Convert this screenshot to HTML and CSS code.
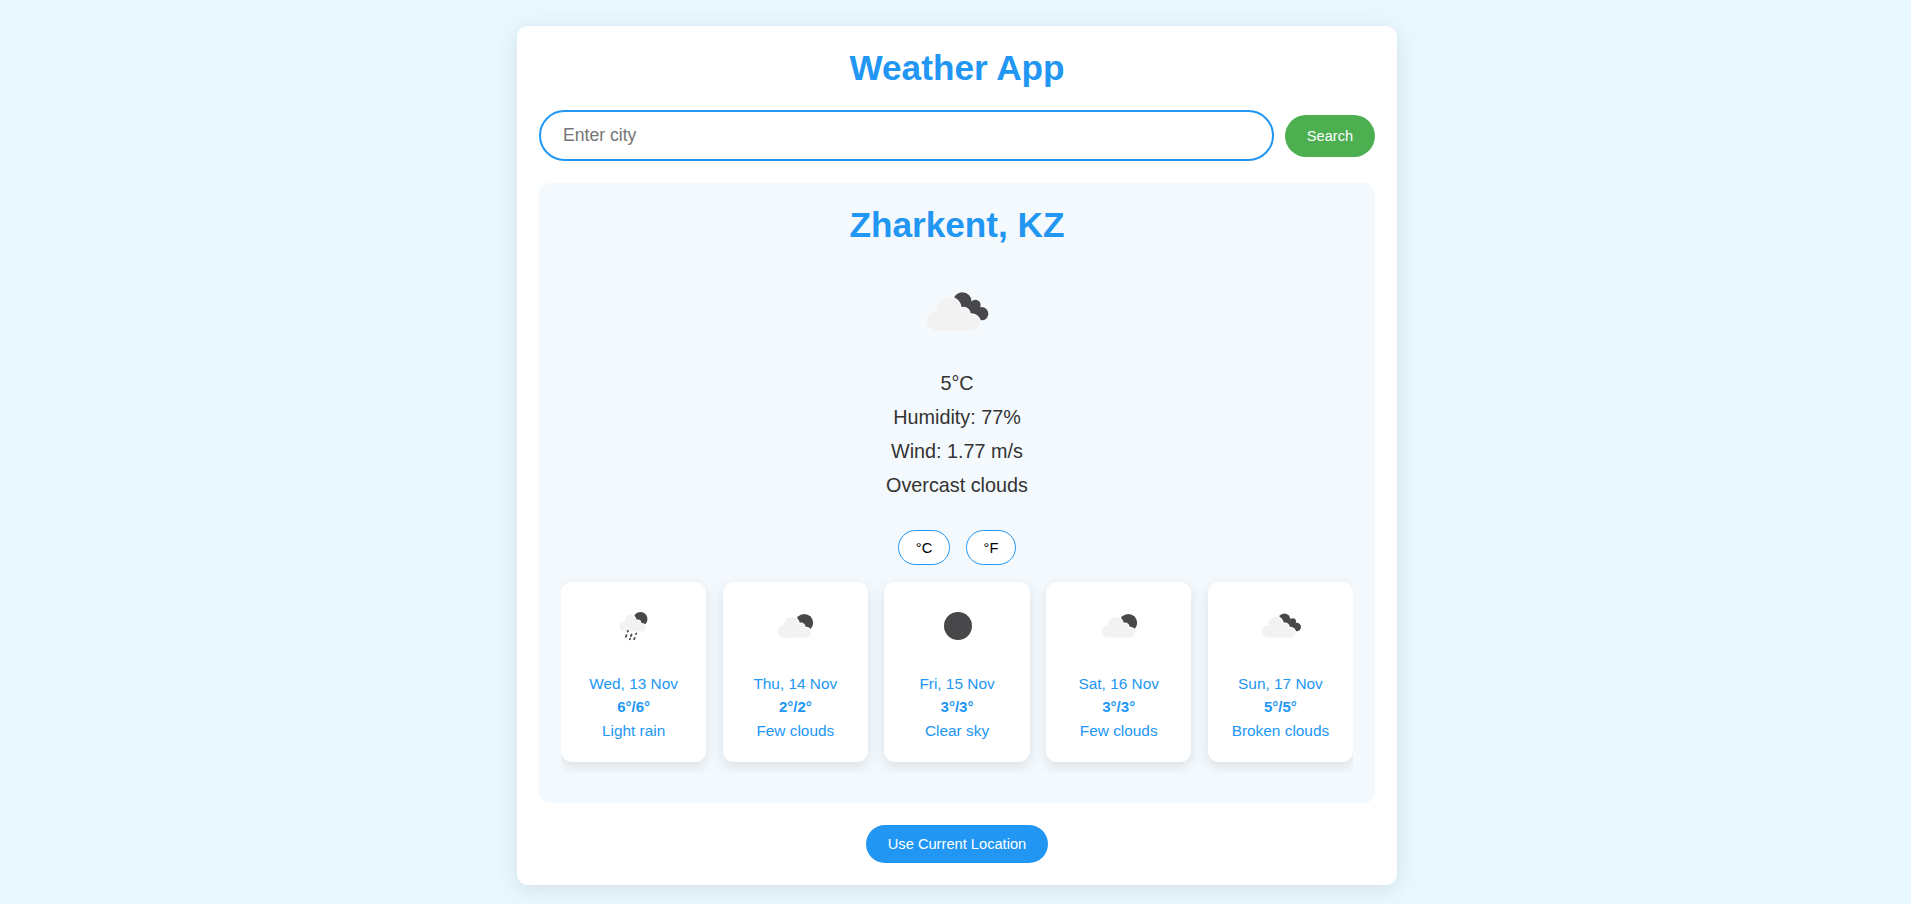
FILE: index.html
```html
<!DOCTYPE html>
<html lang="en">
<head>
<meta charset="utf-8">
<title>Weather App</title>
<link rel="stylesheet" href="styles.css">
</head>
<body>
<svg class="sprite" aria-hidden="true">
  <defs>
    <g id="cloud">
      <circle cx="109" cy="152" r="29"/>
      <circle cx="146" cy="117" r="34"/>
      <circle cx="190" cy="133" r="18"/>
      <circle cx="215" cy="158" r="23"/>
      <rect x="109" y="140" width="97" height="41"/>
    </g>
    <mask id="behind" maskUnits="userSpaceOnUse" x="0" y="-40" width="340" height="340">
      <rect x="0" y="-40" width="340" height="340" fill="#fff"/>
      <use href="#cloud" fill="#000" stroke="#000" stroke-width="10"/>
    </mask>
    <symbol id="overcast" viewBox="6 -39 330 330">
      <g fill="#48484a" mask="url(#behind)">
        <circle cx="187" cy="95" r="28"/>
        <circle cx="226" cy="105" r="16"/>
        <circle cx="245" cy="131" r="20"/>
        <path d="M187 95L226 105L245 131L215 137L190 120Z"/>
      </g>
      <use href="#cloud" fill="#f2f2f2"/>
    </symbol>
    <symbol id="few" viewBox="2 -39 330 330">
      <circle cx="206" cy="111" r="42" fill="#48484a" mask="url(#behind)"/>
      <use href="#cloud" fill="#f2f2f2"/>
    </symbol>
    <symbol id="rain" viewBox="8 -39 330 330">
      <g transform="translate(40 9) scale(.79)">
        <circle cx="207" cy="106" r="42" fill="#48484a" mask="url(#behind)"/>
        <use href="#cloud" fill="#f2f2f2"/>
      </g>
      <path d="M145 149l-2 4M138 169l-4 8M162 166l-4 8M155 185l-2 4M184 161l-2 3M177 182l-4 7" stroke="#48484a" stroke-width="8" stroke-linecap="round"/>
    </symbol>
    <symbol id="clear" viewBox="6 -39 330 330">
      <circle cx="171" cy="126" r="66" fill="#48484a"/>
    </symbol>
  </defs>
</svg>
<main class="container">
  <h1 class="title">Weather App</h1>
  <div class="search">
    <input class="search-input" type="text" placeholder="Enter city">
    <button class="search-btn">Search</button>
  </div>
  <section class="weather">
    <h2 class="title">Zharkent, KZ</h2>
    <svg class="icon-main"><use href="#overcast"/></svg>
    <p class="detail">5°C</p>
    <p class="detail">Humidity: 77%</p>
    <p class="detail">Wind: 1.77 m/s</p>
    <p class="detail">Overcast clouds</p>
    <div class="units"><button class="unit">°C</button><button class="unit">°F</button></div>
    <div class="forecast">
      <article class="card"><svg class="icon"><use href="#rain"/></svg><p>Wed, 13 Nov</p><p class="temp">6°/6°</p><p>Light rain</p></article>
      <article class="card"><svg class="icon"><use href="#few"/></svg><p>Thu, 14 Nov</p><p class="temp">2°/2°</p><p>Few clouds</p></article>
      <article class="card"><svg class="icon"><use href="#clear"/></svg><p>Fri, 15 Nov</p><p class="temp">3°/3°</p><p>Clear sky</p></article>
      <article class="card"><svg class="icon"><use href="#few"/></svg><p>Sat, 16 Nov</p><p class="temp">3°/3°</p><p>Few clouds</p></article>
      <article class="card"><svg class="icon"><use href="#overcast"/></svg><p>Sun, 17 Nov</p><p class="temp">5°/5°</p><p>Broken clouds</p></article>
    </div>
  </section>
  <button class="location">Use Current Location</button>
</main>
</body>
</html>
```
FILE: styles.css
```css
* { box-sizing: border-box; }
body {
  margin: 0;
  height: 904px;
  overflow: hidden;
  padding: 26px 0 0 3px;
  background: #e9f7ff;
  color: #333;
  font-family: "Liberation Sans", Arial, sans-serif;
}
button, input { font-family: inherit; }
p, h1, h2 { margin: 0; }
.sprite { position: absolute; width: 0; height: 0; }
.container {
  width: 880px;
  height: 859px;
  margin: 0 auto;
  padding: 22px;
  display: flex;
  flex-direction: column;
  align-items: center;
  background: #fff;
  border-radius: 11px;
  box-shadow: 0 4px 22px rgba(0, 0, 0, .1);
}
.title { font-size: 35.2px; line-height: 40px; color: #2196f3; text-align: center; }
.search { display: flex; align-items: center; gap: 11px; width: 100%; margin-top: 22px; }
.search-input {
  flex: 1;
  min-width: 0;
  height: 51px;
  padding: 0 22px;
  border: 2px solid #2196f3;
  border-radius: 28px;
  font-size: 17.6px;
  outline: none;
}
.search-btn {
  width: 90px;
  height: 42px;
  margin-top: 1px;
  padding: 0;
  border: 0;
  border-radius: 22px;
  background: #4caf50;
  color: #fff;
  font-size: 14.667px;
}
.weather {
  width: 100%;
  height: 620px;
  margin-top: 22px;
  padding: 22px;
  display: flex;
  flex-direction: column;
  align-items: center;
  background: #f4f9fd;
  border-radius: 11px;
}
.icon-main { flex: none; width: 110px; height: 110px; margin: 12px 0 5px; }
.detail { font-size: 19.8px; line-height: 23px; margin-bottom: 11px; }
.units { display: flex; gap: 16px; margin-top: 22px; }
.unit {
  width: 52px;
  height: 35px;
  padding: 0;
  border: 1px solid #2196f3;
  border-radius: 18px;
  background: #fff;
  color: #000;
  font-size: 14.667px;
}
.unit:last-child { width: 50px; }
.forecast {
  display: flex;
  gap: 16.5px;
  width: 100%;
  height: 208px;
  padding: 17px 0 11px;
  overflow: hidden;
}
.card {
  flex: 1;
  height: 180px;
  padding: 9px 0;
  text-align: center;
  background: #fff;
  border-radius: 11px;
  box-shadow: 0 4.4px 13px rgba(0, 0, 0, .1);
  color: #2196f3;
  font-size: 15.4px;
  line-height: 18px;
}
.card p { margin-bottom: 6px; }
.card .temp { margin: -1px 0 6px; font-weight: bold; font-size: 15px; }
.icon { display: block; width: 70px; height: 70px; margin: 0 auto 14px 38.4px; }
.location {
  width: 182px;
  height: 38px;
  margin-top: 22px;
  padding: 0;
  border: 0;
  border-radius: 22px;
  background: #2196f3;
  color: #fff;
  font-size: 14.667px;
}
```
